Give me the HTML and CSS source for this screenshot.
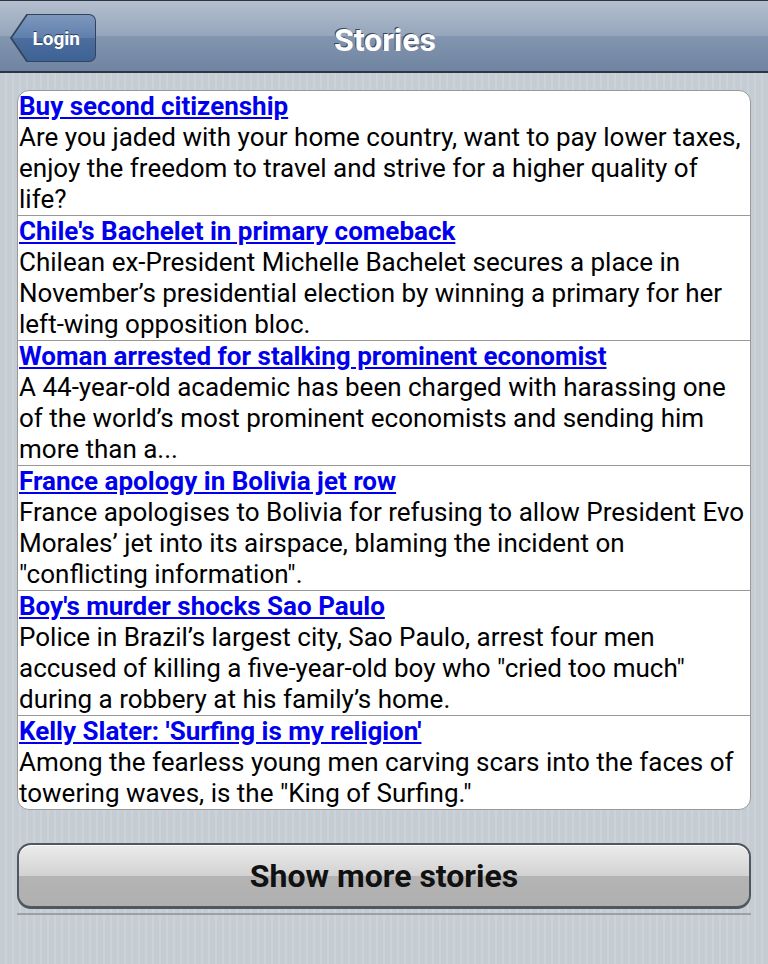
FILE: index.html
```html
<!DOCTYPE html>
<html>
<head>
<meta charset="utf-8">
<link rel="stylesheet" href="styles.css">
</head>
<body>
<div class="page">
  <header class="bar">
    <a class="back" href="#"><span class="back-label">Login</span></a>
    <h1 class="title">Stories</h1>
  </header>
  <main class="content">
    <ul class="list">
      <li class="item"><a href="#" class="item-title">Buy second citizenship</a><p class="item-text">Are you jaded with your home country, want to pay lower taxes, enjoy the freedom to travel and strive for a higher quality of life?</p></li>
      <li class="item"><a href="#" class="item-title">Chile's Bachelet in primary comeback</a><p class="item-text">Chilean ex-President Michelle Bachelet secures a place in November’s presidential election by winning a primary for her left-wing opposition bloc.</p></li>
      <li class="item"><a href="#" class="item-title">Woman arrested for stalking prominent economist</a><p class="item-text">A 44-year-old academic has been charged with harassing one of the world’s most prominent economists and sending him more than a...</p></li>
      <li class="item"><a href="#" class="item-title">France apology in Bolivia jet row</a><p class="item-text">France apologises to Bolivia for refusing to allow President Evo Morales’ jet into its airspace, blaming the incident on "conflicting information".</p></li>
      <li class="item"><a href="#" class="item-title">Boy's murder shocks Sao Paulo</a><p class="item-text">Police in Brazil’s largest city, Sao Paulo, arrest four men accused of killing a five-year-old boy who "cried too much" during a robbery at his family’s home.</p></li>
      <li class="item"><a href="#" class="item-title">Kelly Slater: 'Surfing is my religion'</a><p class="item-text">Among the fearless young men carving scars into the faces of towering waves, is the "King of Surfing."</p></li>
    </ul>
    <button class="more">Show more stories</button>
    <div class="rule"></div>
  </main>
</div>
</body>
</html>
```
FILE: styles.css
```css
html, body {
  margin: 0;
  padding: 0;
}
body {
  font-family: Roboto, "Liberation Sans", sans-serif;
  background: repeating-linear-gradient(90deg, #c5ccd4 0 5px, #cbd2d8 5px 7px);
  min-height: 964px;
}
.bar {
  height: 70px;
  box-sizing: border-box;
  padding-top: 7px;
  border-top: 1px solid #2d3642;
  border-bottom: 2px solid #2d3642;
  background: linear-gradient(#b4bfce, #95a5bb 50%, #8396b0 50%, #6f84a1);
  display: flex;
  align-items: center;
  justify-content: center;
  position: relative;
  height: 73px;
}
.title {
  margin: 0 0 0 2px;
  font-size: 32px;
  font-weight: bold;
  color: #fff;
  text-shadow: -1px -1px 0 #3a4658;
}
.back {
  position: absolute;
  left: 10px;
  top: 13px;
  height: 48px;
  width: 86px;
  display: flex;
  align-items: center;
  justify-content: flex-end;
  text-decoration: none;
}
.back::before {
  content: "";
  position: absolute;
  inset: 0;
  border-radius: 0 7px 7px 0;
  clip-path: polygon(0 50%, 19% 0, 100% 0, 100% 100%, 19% 100%);
  background: #34425a;
}
.back::after {
  content: "";
  position: absolute;
  inset: 1px 1px 1px 2px;
  border-radius: 0 6px 6px 0;
  clip-path: polygon(0 50%, 19% 0, 100% 0, 100% 100%, 19% 100%);
  background: linear-gradient(#7d98bd, #5f7fac 50%, #4d6e9e 50%, #3d6295);
}
.back-label {
  position: relative;
  z-index: 1;
  color: #fff;
  font-weight: bold;
  font-size: 19px;
  padding-right: 16px;
  text-shadow: 0 -1px 0 #2d3a50;
}
.content {
  padding: 17px 17px 0 17px;
}
.list {
  list-style: none;
  margin: 0;
  padding: 0;
  background: #fff;
  border: 1px solid #999;
  border-radius: 12px;
  overflow: hidden;
}
.item {
  border-top: 1px solid #999;
  padding: 0 0 0 1px;
}
.item:first-child {
  border-top: none;
}
.item-title {
  display: block;
  font-size: 26px;
  line-height: 31px;
  font-weight: bold;
  color: #0000ee;
  text-decoration: underline;
}
.item-text {
  margin: 0;
  font-size: 26px;
  line-height: 31px;
  color: #000;
}
.more {
  display: block;
  width: 100%;
  height: 66px;
  margin-top: 33px;
  border: 2px solid #50575f;
  border-bottom-width: 3px;
  border-radius: 14px;
  background: linear-gradient(#ececec, #d2d2d2 50%, #b4b4b4 50%, #b0b0b0);
  font-family: Roboto, "Liberation Sans", sans-serif;
  font-size: 32px;
  font-weight: bold;
  color: #111;
  box-shadow: inset 0 1px 0 #fff;
}
.rule {
  height: 2px;
  margin-top: 4px;
  background: #9aa0a6;
}
```
